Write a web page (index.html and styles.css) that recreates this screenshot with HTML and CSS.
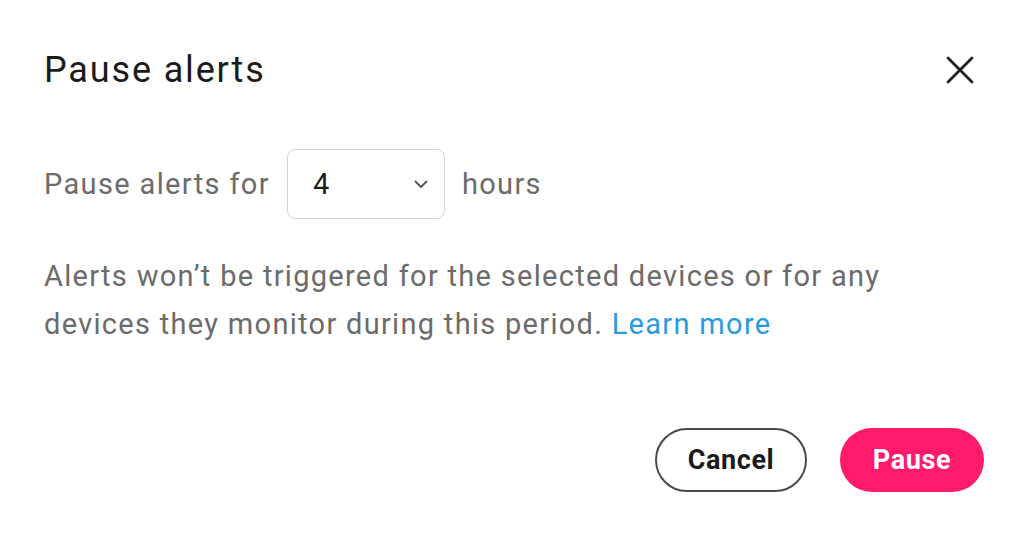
FILE: index.html
```html
<!DOCTYPE html>
<html>
<head>
<meta charset="utf-8">
<link rel="stylesheet" href="styles.css">
</head>
<body>
<div class="dialog">
  <div class="header">
    <h1 class="title">Pause alerts</h1>
    <button class="close" aria-label="Close">
      <svg width="28" height="28" viewBox="0 0 28 28"><path d="M2 2 L26 26 M26 2 L2 26" stroke="#1f1f1f" stroke-width="2.8" stroke-linecap="round"/></svg>
    </button>
  </div>
  <div class="row">
    <span class="label">Pause alerts for</span>
    <div class="select">
      <span class="value">4</span>
      <svg class="chev" width="14" height="9" viewBox="0 0 14 9"><path d="M1.5 1.5 L7 7 L12.5 1.5" fill="none" stroke="#555" stroke-width="1.8" stroke-linecap="round" stroke-linejoin="round"/></svg>
    </div>
    <span class="label">hours</span>
  </div>
  <p class="desc">Alerts won’t be triggered for the selected devices or for any devices they monitor during this period. <a class="link" href="#">Learn more</a></p>
  <div class="actions">
    <button class="btn cancel">Cancel</button>
    <button class="btn primary">Pause</button>
  </div>
</div>
</body>
</html>
```
FILE: styles.css
```css
html, body {
  margin: 0;
  padding: 0;
  background: #ffffff;
  font-family: Roboto, "Noto Sans", sans-serif;
}
.dialog {
  width: 1028px;
  height: 536px;
  box-sizing: border-box;
  padding: 50px 44px 0 44px;
}
.header {
  display: flex;
  justify-content: space-between;
  align-items: center;
  height: 40px;
}
.title {
  margin: 0;
  font-size: 36px;
  font-weight: 400;
  color: #1b1b1b;
  line-height: 40px;
  letter-spacing: 1.85px;
}
.close {
  border: none;
  background: none;
  padding: 0;
  width: 28px;
  height: 28px;
  margin-right: 10px;
  display: flex;
}
.row {
  display: flex;
  align-items: center;
  margin-top: 59px;
  gap: 17px;
}
.label {
  font-size: 29px;
  color: #6b6b6b;
  letter-spacing: 1.35px;
}
.select {
  width: 158px;
  height: 70px;
  box-sizing: border-box;
  border: 1.5px solid #d6d6d6;
  border-radius: 8px;
  display: flex;
  align-items: center;
  justify-content: space-between;
  padding: 0 16px 0 25px;
}
.value {
  font-size: 29px;
  color: #1b1b1b;
}
.desc {
  margin: 33px 0 0 0;
  font-size: 29px;
  line-height: 48px;
  color: #6b6b6b;
  letter-spacing: 1.3px;
  width: 900px;
}
.link {
  color: #2a9ae0;
  text-decoration: none;
}
.actions {
  display: flex;
  justify-content: flex-end;
  gap: 33px;
  margin-top: 80px;
}
.btn {
  height: 64px;
  border-radius: 32px;
  font-family: Roboto, sans-serif;
  font-size: 27px;
  font-weight: 700;
  letter-spacing: 0.6px;
  box-sizing: border-box;
}
.cancel {
  width: 152px;
  background: #fff;
  border: 2px solid #4a4a4a;
  color: #1b1b1b;
}
.primary {
  width: 144px;
  background: #ff1a6c;
  border: none;
  color: #fff;
}
```
